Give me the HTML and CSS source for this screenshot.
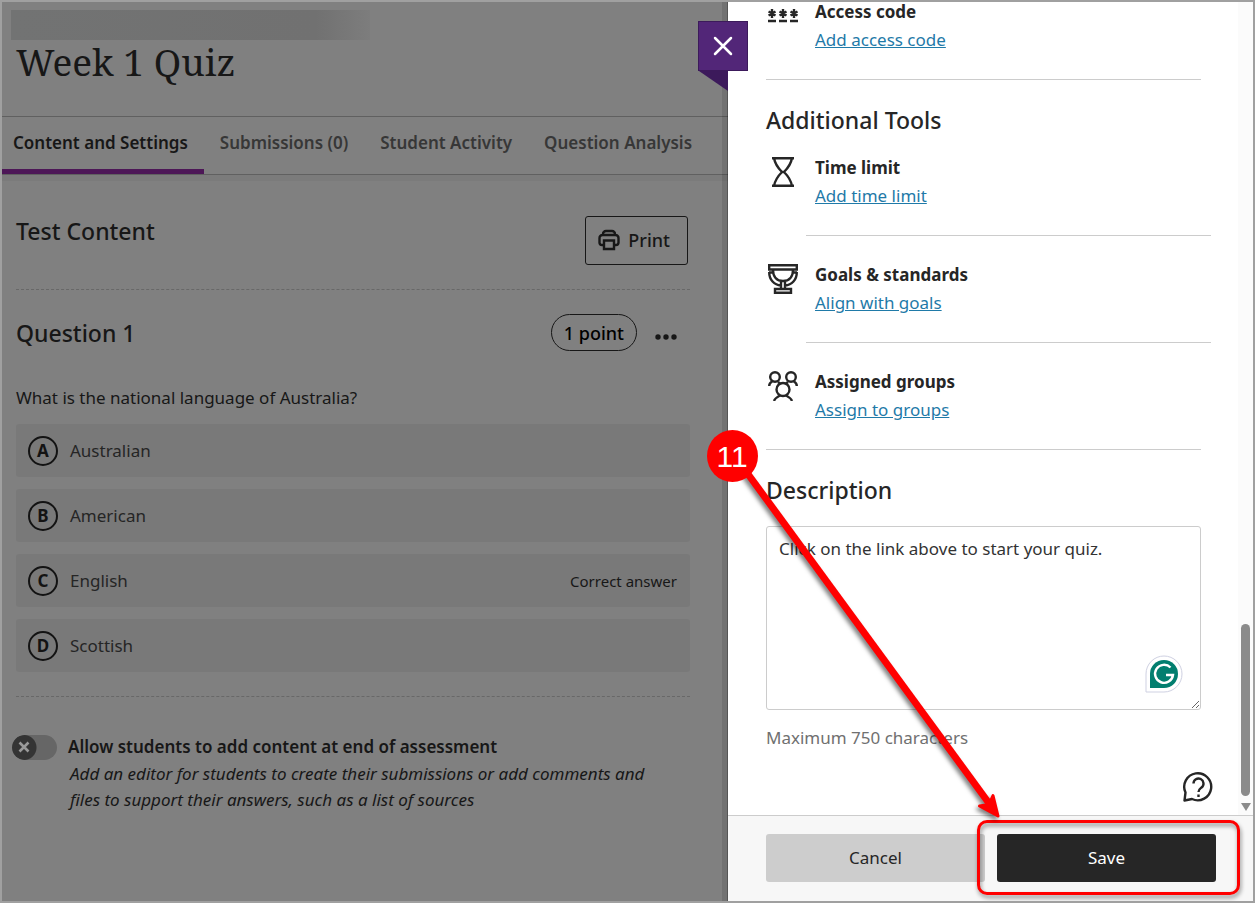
FILE: index.html
```html
<!DOCTYPE html>
<html lang="en">
<head>
    <meta charset="UTF-8">
    <title>Week 1 Quiz</title>
    <link rel="stylesheet" href="styles.css">
</head>
<body>
    <main class="page">
        <header class="page-header">
            <div class="course-name"></div>
            <h1>Week 1 Quiz</h1>
        </header>

        <nav class="tabs">
            <a href="#" class="active">Content and Settings</a>
            <a href="#">Submissions (0)</a>
            <a href="#">Student Activity</a>
            <a href="#">Question Analysis</a>
        </nav>

        <div class="content">
            <div class="content-head">
                <h2>Test Content</h2>
                <button class="print">
                    <svg width="22" height="22" viewBox="0 0 22 22" fill="none" stroke="currentColor" stroke-width="2.400">
                        <path d="M5 6V5a3 3 0 0 1 3-3h6a3 3 0 0 1 3 3v1M5 16H4a2.500 2.500 0 0 1-2.500-2.500V9A3 3 0 0 1 4.500 6h13a3 3 0 0 1 3 3v4.500A2.500 2.500 0 0 1 18 16h-1"/>
                        <path d="M6 11.500h10V20H6z"/>
                    </svg>
                    Print
                </button>
            </div>

            <section class="question">
                <div class="question-head">
                    <h2>Question 1</h2>
                    <button class="points">1 point</button>
                    <button class="more" aria-label="More options">
                        <svg width="22" height="6" viewBox="0 0 22 6" fill="currentColor">
                            <circle cx="3" cy="3" r="2.700"/><circle cx="11" cy="3" r="2.700"/><circle cx="19" cy="3" r="2.700"/>
                        </svg>
                    </button>
                </div>
                <p>What is the national language of Australia?</p>
                <ul class="answers">
                    <li><span class="letter">A</span>Australian</li>
                    <li><span class="letter">B</span>American</li>
                    <li><span class="letter">C</span>English<span class="correct">Correct answer</span></li>
                    <li><span class="letter">D</span>Scottish</li>
                </ul>
            </section>

            <div class="allow">
                <input type="checkbox" id="allow" class="switch">
                <svg class="switch-x" width="12" height="12" viewBox="0 0 12 12" stroke="currentColor" stroke-width="2.600">
                    <path d="M1.500 1.500l9 9M10.500 1.500l-9 9"/>
                </svg>
                <div>
                    <label for="allow">Allow students to add content at end of assessment</label>
                    <p>Add an editor for students to create their submissions or add comments and files to support their answers, such as a list of sources</p>
                </div>
            </div>
        </div>
    </main>

    <aside class="panel">
        <button class="close" aria-label="Close">
            <svg width="20" height="20" viewBox="0 0 20 20" stroke="currentColor" stroke-width="2.500" stroke-linecap="round">
                <path d="M2 2l16 16M18 2L2 18"/>
            </svg>
        </button>

        <div class="panel-scroll">
            <div class="panel-body">
                <div class="setting">
                    <svg class="code-icon" width="30" height="14" viewBox="0 0 30 14" fill="none" stroke="currentColor" stroke-width="2.400">
                        <path d="M4 0v9M.5 2.500l7 4M7.500 2.500l-7 4M0 12h8M15 0v9M11.500 2.500l7 4M18.500 2.500l-7 4M11 12h8M26 0v9M22.500 2.500l7 4M29.500 2.500l-7 4M22 12h8"/>
                    </svg>
                    <div>
                        <h3>Access code</h3>
                        <a href="#">Add access code</a>
                    </div>
                </div>
                <hr>

                <h2>Additional Tools</h2>
                <div class="setting">
                    <svg width="30" height="30" viewBox="0 0 30 30" fill="none" stroke="currentColor" stroke-width="2.400">
                        <path d="M4 1.200h22M4 28.800h22M6 1c1 6 4 10 8 14-4 4-7 8-8 14M24 1c-1 6-4 10-8 14 4 4 7 8 8 14M13 15h4"/>
                    </svg>
                    <div>
                        <h3>Time limit</h3>
                        <a href="#">Add time limit</a>
                    </div>
                </div>
                <hr class="inner">
                <div class="setting">
                    <svg width="30" height="30" viewBox="0 0 30 30" fill="none" stroke="currentColor" stroke-width="2.400">
                        <path d="M1.200 1.200h27.600v4.300H1.200zM5 6c0 7 4 11 10 11s10-4 10-11M1 8.500h4M29 8.500h-4M1.200 8c0 8 5 13 11.800 13.500M28.800 8c0 8-5 13-11.800 13.500M13 17v8M17 17v8M7 25h16v3.800H7z"/>
                    </svg>
                    <div>
                        <h3>Goals &amp; standards</h3>
                        <a href="#">Align with goals</a>
                    </div>
                </div>
                <hr class="inner">
                <div class="setting">
                    <svg width="30" height="30" viewBox="0 0 30 30" fill="none" stroke="currentColor" stroke-width="2.400">
                        <circle cx="7" cy="6" r="4.800"/><circle cx="23" cy="6" r="4.800"/><circle cx="15" cy="18.500" r="6.500"/>
                        <path d="M1.200 15c0-2 1-3.500 3-4.500M28.800 15c0-2-1-3.500-3-4.500M10 11l2 1.500M20 11l-2 1.500M6 30c1-3 3-4 6-5.500M24 30c-1-3-3-4-6-5.500"/>
                    </svg>
                    <div>
                        <h3>Assigned groups</h3>
                        <a href="#">Assign to groups</a>
                    </div>
                </div>
                <hr>

                <h2><label for="description">Description</label></h2>
                <div class="description">
                    <textarea id="description">Click on the link above to start your quiz.</textarea>
                    <svg class="grammar" width="38" height="38" viewBox="0 0 38 38" fill="none">
                        <path d="M1 37V19a18 18 0 1 1 18 18z" fill="#fff" stroke="#cfd1e2"/>
                        <path d="M5 33V19a14 14 0 1 1 14 14z" fill="#027e6f"/>
                        <path d="M25.500 12.500a9 9 0 1 0 2.500 7.500h-7" stroke="#fff" stroke-width="2.400"/>
                    </svg>
                </div>
                <p class="hint">Maximum 750 characters</p>
                <button class="help" aria-label="Help">
                    <svg width="32" height="32" viewBox="0 0 32 32" fill="none" stroke="currentColor" stroke-width="2.400">
                        <path d="M2.500 29.500l1-8A13.500 13.500 0 1 1 10 28z" stroke-linejoin="round"/>
                        <path d="M11.500 12.500a5 5 0 1 1 8 4c-2 1.500-3 2-3 4.500M16.500 23.500v2.500"/>
                    </svg>
                </button>
            </div>
            <div class="scrollbar">
                <div class="thumb"></div>
                <div class="arrow-down"></div>
            </div>
        </div>

        <footer class="panel-footer">
            <button class="cancel">Cancel</button>
            <div class="save-wrap">
                <button class="save">Save</button>
                <div class="highlight"></div>
            </div>
        </footer>

        <!-- step marker and the arrow to the save button -->
        <svg class="step" width="310" height="410" viewBox="0 0 310 410">
            <g class="step-arrow">
                <path d="M45 50L291 386" fill="none" stroke="#f00" stroke-width="7"/>
                <path d="M298 396L279.500 386L289 384.500L293 375.500z" fill="#f00" stroke="#f00" stroke-width="3" stroke-linejoin="round"/>
            </g>
            <ellipse cx="32.500" cy="36" rx="25.500" ry="26" fill="#f00"/>
            <text x="32" y="47" text-anchor="middle">11</text>
        </svg>
    </aside>
</body>
</html>
```
FILE: styles.css
```css
* { box-sizing: border-box; }
body {
    display: flex;
    min-height: 100vh;
    margin: 0;
    border: 2px solid #a0a0a0;
    background: #808080;
    color: #171717;
    font: 17px/28px "Noto Sans", sans-serif;
    overflow-x: hidden;
}
h1, h2, h3, p, ul { margin: 0; padding: 0; }
button { font: inherit; color: inherit; cursor: pointer; }
h2 { font-size: 23px; line-height: 30px; font-weight: 500; }
h3 { font-size: 17px; line-height: 28px; font-weight: 700; }

/* page behind the panel */
.page { flex: 1; min-width: 0; }
.page-header { height: 114px; padding: 8px 9px; }
.course-name {
    width: 359px;
    max-width: 100%;
    height: 30px;
    background: linear-gradient(to right, #727373, #717171 85%, #7d7d7d);
}
h1 {
    padding-left: 5px;
    font: 400 37px/44px "Noto Serif", "DejaVu Serif", serif;
}
.tabs {
    display: flex;
    height: 59px;
    border-top: 1px solid #606060;
    border-bottom: 1px solid #606060;
    box-shadow: 0 6px 0 #7b7b7b;
    white-space: nowrap;
}
.tabs a {
    padding: 12px 16px 0;
    color: #373737;
    font-weight: 600;
    text-decoration: none;
}
.tabs a.active {
    padding-left: 11px;
    border-bottom: 5px solid #4d1757;
    color: #171717;
}

.content { padding: 41px 38px 0 14px; }
.content-head {
    display: flex;
    justify-content: space-between;
    height: 74px;
    border-bottom: 1px dashed #686868;
}
.print {
    display: flex;
    align-items: center;
    gap: 8px;
    height: 49px;
    margin-right: 2px;
    padding: 0 17px 2px 12px;
    border: 1px solid #171717;
    border-radius: 3px;
    background: none;
    font-size: 18px;
    font-weight: 500;
}
.question-head {
    display: flex;
    align-items: center;
    margin-top: 24px;
}
.question-head h2 { flex: 1; }
.points {
    height: 37px;
    padding: 0 12px;
    border: 1px solid #171717;
    border-radius: 19px;
    background: none;
    color: #000;
    font-size: 18px;
    font-weight: 500;
}
.more {
    display: flex;
    margin-left: 5px;
    padding: 12px 13px 4px;
    border: 0;
    background: none;
}
.question p { margin: 33px 0 12px; }
.answers {
    display: grid;
    gap: 12px;
    padding-bottom: 24px;
    border-bottom: 1px dashed #686868;
    list-style: none;
}
.answers li {
    display: flex;
    align-items: center;
    gap: 12px;
    height: 53px;
    padding: 0 13px 0 12px;
    border-radius: 3px;
    background: #797979;
    color: #252525;
}
.letter {
    width: 30px;
    height: 30px;
    border: 2px solid #131313;
    border-radius: 50%;
    color: #131313;
    font-weight: 700;
    line-height: 26px;
    text-align: center;
}
.correct {
    margin-left: auto;
    color: #171717;
    font-size: 15px;
}
.allow {
    display: flex;
    gap: 11px;
    position: relative;
    margin: 36px 0 0 -4px;
}
.switch {
    flex: none;
    appearance: none;
    width: 45px;
    height: 25px;
    margin: 2px 0 0;
    border-radius: 13px;
    background: radial-gradient(circle at 12px 50%, #343434 12px, #666 13px);
}
.switch-x {
    position: absolute;
    left: 6px;
    top: 8px;
    color: #999;
    pointer-events: none;
}
.allow label {
    display: block;
    font-weight: 600;
}
.allow p {
    padding: 0 24px 0 2px;
    font-style: italic;
    line-height: 26px;
}

/* settings panel */
.panel {
    display: flex;
    flex-direction: column;
    flex: 0 0 525px;
    position: relative;
    background: #fff;
    box-shadow: -1px 0 0 rgba(0, 0, 0, .25), -6px 0 0 rgba(0, 0, 0, .11);
    color: #262626;
}
.close {
    position: absolute;
    left: -30px;
    top: 19px;
    width: 50px;
    height: 50px;
    padding: 13px 14px;
    border: 1px solid #3c1a5b;
    background: #522678;
    color: #fff;
}
.close svg { display: block; }
.close::after {
    content: "";
    position: absolute;
    left: 0;
    top: 49px;
    border-top: 20px solid #3c1a5b;
    border-left: 29px solid transparent;
}
.panel-scroll { display: flex; flex: 1; }
.panel-body {
    flex: 1;
    padding: 0 37px 0 38px;
}
.panel-body > .setting:first-child { margin-top: -4px; }
.panel-body h2 { margin: 25px 0 19px; }
.setting {
    display: flex;
    gap: 17px;
    padding-left: 2px;
}
.setting svg { margin-top: 3px; }
.setting .code-icon { margin-top: 11px; }
.panel a { color: #1f7aa8; }
hr {
    height: 1px;
    margin: 25px 0;
    border: 0;
    background: #ccc;
}
hr.inner { margin-left: 40px; margin-right: -10px; }
.description { position: relative; padding-top: 2px; }
textarea {
    display: block;
    width: 100%;
    height: 184px;
    padding: 8px 12px;
    border: 1px solid #ccc;
    border-radius: 3px;
    color: #333;
    font: inherit;
}
.grammar {
    position: absolute;
    right: 18px;
    bottom: 17px;
}
.hint { margin-top: 14px; color: #707070; }
.help {
    display: block;
    margin: 19px -13px 12px auto;
    padding: 0;
    border: 0;
    background: none;
}
.help svg { display: block; }
.scrollbar {
    display: flex;
    flex-direction: column;
    align-items: center;
    justify-content: flex-end;
    width: 15px;
    padding-bottom: 4px;
    background: #fbfbfb;
}
.thumb {
    width: 9px;
    height: 172px;
    margin-bottom: 7px;
    border-radius: 5px;
    background: #8b8b8b;
}
.arrow-down {
    border: 5px solid transparent;
    border-top: 8px solid #8b8b8b;
    border-bottom: 0;
}
.panel-footer {
    display: flex;
    align-items: flex-start;
    gap: 12px;
    height: 86px;
    padding: 18px 37px 0 38px;
    border-top: 1px solid #ccc;
    background: #f7f7f7;
}
.panel-footer button {
    display: block;
    width: 100%;
    height: 48px;
    padding: 0;
    border: 0;
    border-radius: 3px;
}
.panel-footer .cancel { flex: 1; background: #cdcdcd; }
.save-wrap { flex: 1; position: relative; }
.panel-footer .save { background: #262626; color: #fff; }
.highlight {
    position: absolute;
    inset: -14px -24px -13px -20px;
    border: 3px solid #f00;
    border-radius: 10px;
    filter: drop-shadow(1px 3px 2px rgba(0, 0, 0, .45));
    pointer-events: none;
}
.step {
    position: absolute;
    left: -28px;
    top: 418px;
    pointer-events: none;
}
.step-arrow { filter: drop-shadow(-2px 3px 2px rgba(0, 0, 0, .5)); }
.step text { fill: #fff; font: 30px "Liberation Sans", sans-serif; }
```
